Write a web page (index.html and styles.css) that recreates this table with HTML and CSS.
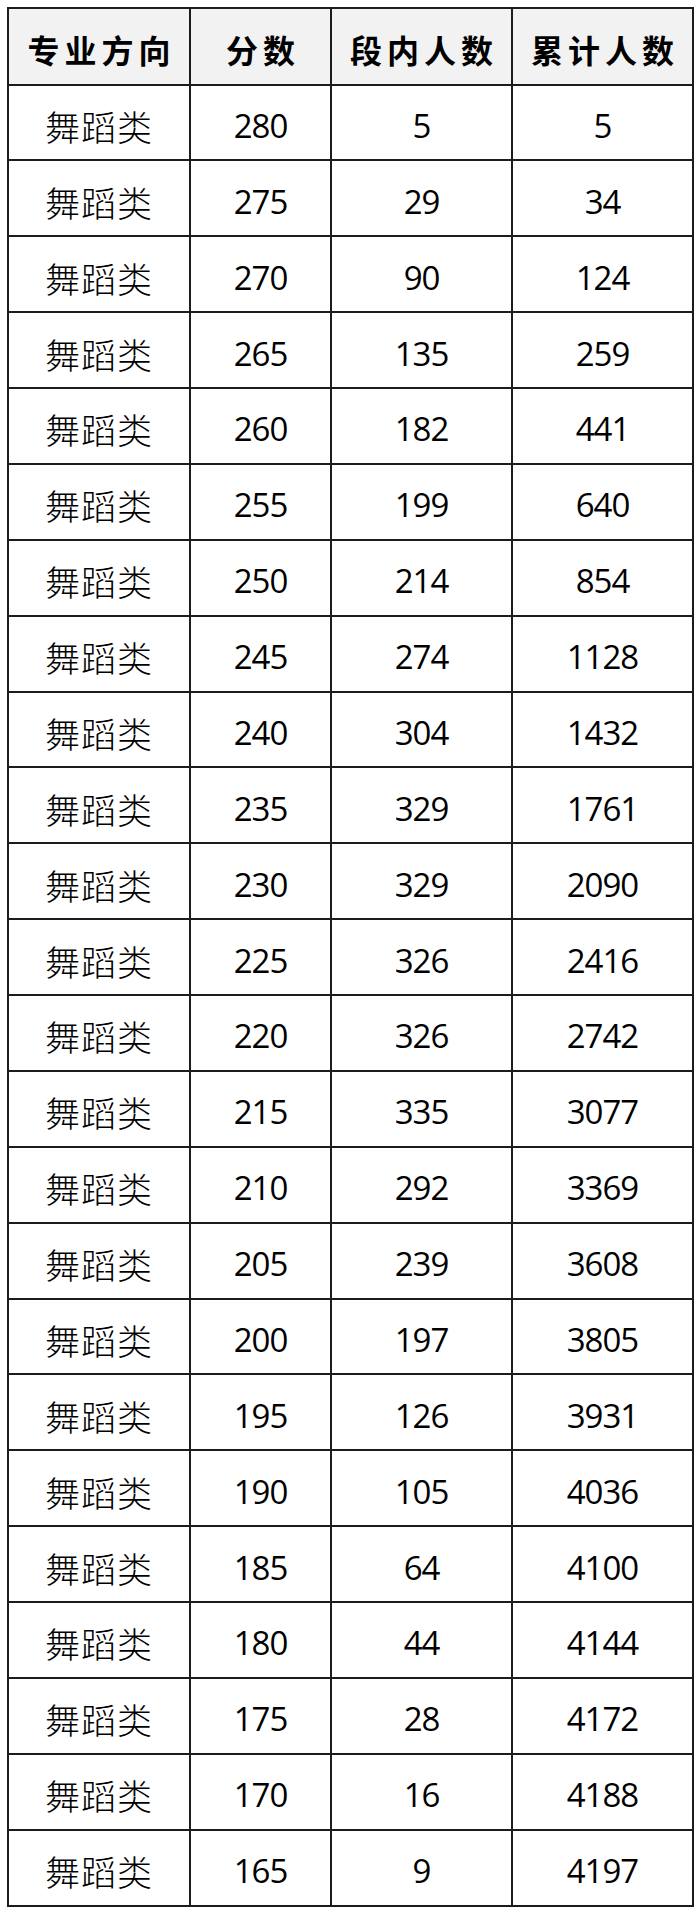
FILE: index.html
```html
<!DOCTYPE html>
<html lang="zh">
<head>
<meta charset="utf-8">
<link rel="stylesheet" href="styles.css">
</head>
<body>
<table class="score-table">
  <colgroup>
    <col class="c1"><col class="c2"><col class="c3"><col class="c4">
  </colgroup>
  <thead>
    <tr><th>专业方向</th><th>分数</th><th>段内人数</th><th>累计人数</th></tr>
  </thead>
  <tbody>
    <tr><td class="cat">舞蹈类</td><td class="num">280</td><td class="num">5</td><td class="num">5</td></tr>
    <tr><td class="cat">舞蹈类</td><td class="num">275</td><td class="num">29</td><td class="num">34</td></tr>
    <tr><td class="cat">舞蹈类</td><td class="num">270</td><td class="num">90</td><td class="num">124</td></tr>
    <tr><td class="cat">舞蹈类</td><td class="num">265</td><td class="num">135</td><td class="num">259</td></tr>
    <tr><td class="cat">舞蹈类</td><td class="num">260</td><td class="num">182</td><td class="num">441</td></tr>
    <tr><td class="cat">舞蹈类</td><td class="num">255</td><td class="num">199</td><td class="num">640</td></tr>
    <tr><td class="cat">舞蹈类</td><td class="num">250</td><td class="num">214</td><td class="num">854</td></tr>
    <tr><td class="cat">舞蹈类</td><td class="num">245</td><td class="num">274</td><td class="num">1128</td></tr>
    <tr><td class="cat">舞蹈类</td><td class="num">240</td><td class="num">304</td><td class="num">1432</td></tr>
    <tr><td class="cat">舞蹈类</td><td class="num">235</td><td class="num">329</td><td class="num">1761</td></tr>
    <tr><td class="cat">舞蹈类</td><td class="num">230</td><td class="num">329</td><td class="num">2090</td></tr>
    <tr><td class="cat">舞蹈类</td><td class="num">225</td><td class="num">326</td><td class="num">2416</td></tr>
    <tr><td class="cat">舞蹈类</td><td class="num">220</td><td class="num">326</td><td class="num">2742</td></tr>
    <tr><td class="cat">舞蹈类</td><td class="num">215</td><td class="num">335</td><td class="num">3077</td></tr>
    <tr><td class="cat">舞蹈类</td><td class="num">210</td><td class="num">292</td><td class="num">3369</td></tr>
    <tr><td class="cat">舞蹈类</td><td class="num">205</td><td class="num">239</td><td class="num">3608</td></tr>
    <tr><td class="cat">舞蹈类</td><td class="num">200</td><td class="num">197</td><td class="num">3805</td></tr>
    <tr><td class="cat">舞蹈类</td><td class="num">195</td><td class="num">126</td><td class="num">3931</td></tr>
    <tr><td class="cat">舞蹈类</td><td class="num">190</td><td class="num">105</td><td class="num">4036</td></tr>
    <tr><td class="cat">舞蹈类</td><td class="num">185</td><td class="num">64</td><td class="num">4100</td></tr>
    <tr><td class="cat">舞蹈类</td><td class="num">180</td><td class="num">44</td><td class="num">4144</td></tr>
    <tr><td class="cat">舞蹈类</td><td class="num">175</td><td class="num">28</td><td class="num">4172</td></tr>
    <tr><td class="cat">舞蹈类</td><td class="num">170</td><td class="num">16</td><td class="num">4188</td></tr>
    <tr><td class="cat">舞蹈类</td><td class="num">165</td><td class="num">9</td><td class="num">4197</td></tr>
  </tbody>
</table>
</body>
</html>
```

FILE: styles.css
```css
html, body {
  margin: 0;
  padding: 0;
  background: #ffffff;
}

body {
  padding: 7px 0 0 7px;
}

.score-table {
  border-collapse: collapse;
  table-layout: fixed;
  width: 685px;
  color: #000;
}

.score-table col.c1 { width: 182px; }
.score-table col.c2 { width: 141px; }
.score-table col.c3 { width: 181px; }
.score-table col.c4 { width: 181px; }

.score-table th,
.score-table td {
  border: 2px solid #1c1c1c;
  text-align: center;
  vertical-align: middle;
  padding: 6px 0 0 0;
  box-sizing: border-box;
}

.score-table thead th {
  height: 76.5px;
  background: #f2f2f2;
  font-family: "Noto Sans CJK SC", sans-serif;
  font-weight: 700;
  font-size: 32px;
  letter-spacing: 5px;
  line-height: 1;
  padding-left: 5px;
}

.score-table tbody td {
  height: 75.875px;
}

.score-table td.cat {
  font-family: "Noto Sans CJK SC", sans-serif;
  font-weight: 300;
  font-size: 35px;
  letter-spacing: 1px;
  line-height: 1;
}

.score-table td.num {
  font-family: "Open Sans", "Liberation Sans", sans-serif;
  font-weight: 400;
  font-size: 33px;
  letter-spacing: -1px;
  line-height: 1;
}
```
